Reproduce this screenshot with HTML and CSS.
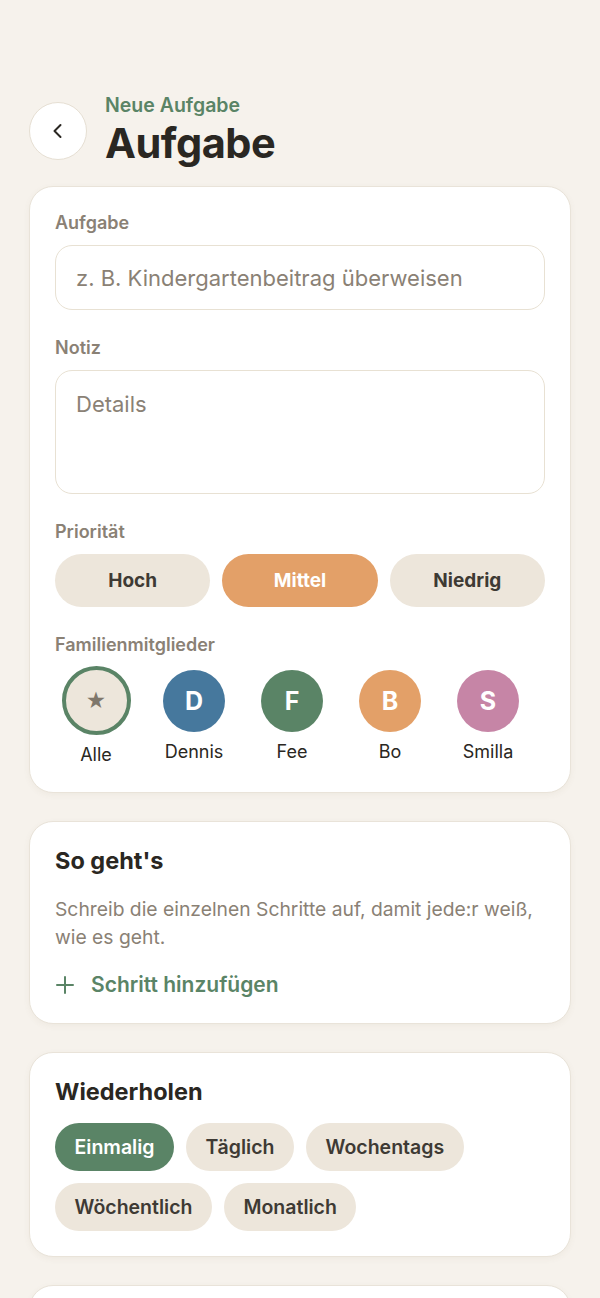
FILE: index.html
```html
<!DOCTYPE html>
<html lang="de">
<head>
    <meta charset="UTF-8">
    <meta name="viewport" content="width=device-width, initial-scale=1.0">
    <title>Neue Aufgabe</title>
    <link rel="stylesheet" href="styles.css">
</head>
<body>

    <div class="seite">
        <header class="kopf">
            <button class="zurueck" aria-label="Zurück">
                <svg width="20" height="20" viewBox="0 0 20 20"><path d="M12.5 4 L6.5 10 L12.5 16" fill="none" stroke="#2a2722" stroke-width="2" stroke-linecap="round" stroke-linejoin="round"/></svg>
            </button>
            <div class="titel">
                <div class="unterzeile">Neue Aufgabe</div>
                <h1>Aufgabe</h1>
            </div>
        </header>

        <section class="karte formular">
            <div class="feld">
                <label class="label">Aufgabe</label>
                <div class="eingabe">z. B. Kindergartenbeitrag überweisen</div>
            </div>
            <div class="feld">
                <label class="label">Notiz</label>
                <div class="eingabe notiz">Details</div>
            </div>
            <div class="feld">
                <label class="label">Priorität</label>
                <div class="prioritaet">
                    <button class="pille">Hoch</button>
                    <button class="pille aktiv-orange">Mittel</button>
                    <button class="pille">Niedrig</button>
                </div>
            </div>
            <div class="feld">
                <label class="label">Familienmitglieder</label>
                <div class="mitglieder">
                    <div class="mitglied gewaehlt">
                        <div class="avatar alle">★</div>
                        <span>Alle</span>
                    </div>
                    <div class="mitglied">
                        <div class="avatar blau">D</div>
                        <span>Dennis</span>
                    </div>
                    <div class="mitglied">
                        <div class="avatar gruen">F</div>
                        <span>Fee</span>
                    </div>
                    <div class="mitglied">
                        <div class="avatar orange">B</div>
                        <span>Bo</span>
                    </div>
                    <div class="mitglied">
                        <div class="avatar rosa">S</div>
                        <span>Smilla</span>
                    </div>
                </div>
            </div>
        </section>

        <section class="karte">
            <h2>So geht's</h2>
            <p class="hinweis">Schreib die einzelnen Schritte auf, damit jede:r weiß, wie es geht.</p>
            <button class="hinzufuegen">
                <svg width="20" height="20" viewBox="0 0 20 20"><path d="M10 2 V18 M2 10 H18" stroke="#5a8466" stroke-width="2" stroke-linecap="round"/></svg>
                Schritt hinzufügen
            </button>
        </section>

        <section class="karte">
            <h2>Wiederholen</h2>
            <div class="chips">
                <button class="chip aktiv">Einmalig</button>
                <button class="chip">Täglich</button>
                <button class="chip">Wochentags</button>
                <button class="chip">Wöchentlich</button>
                <button class="chip">Monatlich</button>
            </div>
        </section>

        <section class="karte"></section>
    </div>

</body>
</html>
```

FILE: styles.css
```css
body {
    font-family: Inter, "Noto Sans", sans-serif;
    background-color: #f6f2ec;
    margin: 0;
    padding: 0;
    color: #2a2722;
}

.seite {
    padding: 95px 29px 0;
    display: flex;
    flex-direction: column;
    gap: 28px;
}

.kopf {
    display: flex;
    align-items: flex-start;
    gap: 18px;
    margin-bottom: -10px;
}

.zurueck {
    width: 58px;
    height: 58px;
    border-radius: 50%;
    background-color: #ffffff;
    border: 1px solid #e6dfd3;
    display: flex;
    align-items: center;
    justify-content: center;
    padding: 0;
    flex-shrink: 0;
    margin-top: 7px;
}

.unterzeile {
    color: #5a8466;
    font-size: 19.5px;
    font-weight: 600;
    line-height: 20px;
}

h1 {
    margin: 3px 0 0;
    font-size: 41.5px;
    font-weight: 700;
    line-height: 50px;
    letter-spacing: -0.5px;
    color: #2a2722;
}

.karte {
    background-color: #ffffff;
    border: 1px solid #e9e3d9;
    border-radius: 24px;
    box-shadow: 0 2px 6px rgba(120, 100, 70, 0.06);
    padding: 25px 25px 25px;
    min-height: 20px;
}

.formular {
    display: flex;
    flex-direction: column;
    gap: 27px;
    padding-bottom: 26px;
}

.label {
    display: block;
    color: #8a8175;
    font-size: 18px;
    font-weight: 600;
    line-height: 22px;
    margin-bottom: 11px;
}

.eingabe {
    border: 1.5px solid #e8e1d3;
    border-radius: 17px;
    height: 65px;
    box-sizing: border-box;
    padding: 0 20px;
    display: flex;
    align-items: center;
    font-size: 22px;
    color: #8a8175;
}

.eingabe.notiz {
    height: 124px;
    align-items: flex-start;
    padding-top: 20px;
}

.prioritaet {
    display: grid;
    grid-template-columns: 1fr 1fr 1fr;
    gap: 12px;
}

button {
    font-family: inherit;
    border: none;
    cursor: pointer;
}

.pille {
    height: 53px;
    border-radius: 27px;
    background-color: #ede6db;
    color: #3e3a34;
    font-size: 19px;
    font-weight: 700;
}

.pille.aktiv-orange {
    background-color: #e3a068;
    color: #ffffff;
}

.mitglieder {
    display: flex;
    gap: 16px;
    margin-top: 14px;
}

.mitglied {
    width: 82px;
    display: flex;
    flex-direction: column;
    align-items: center;
    gap: 9px;
    font-size: 18px;
    line-height: 22px;
    color: #2a2722;
}

.avatar {
    width: 62px;
    height: 62px;
    border-radius: 50%;
    display: flex;
    align-items: center;
    justify-content: center;
    color: #ffffff;
    font-size: 25px;
    font-weight: 700;
    box-sizing: border-box;
}

.mitglied.gewaehlt .avatar {
    width: 69px;
    height: 69px;
    margin-top: -4px;
    border: 4px solid #5a8466;
}

.avatar.alle {
    background-color: #ede6db;
    color: #7f776b;
    font-size: 20px;
}

.blau { background-color: #46789d; }
.gruen { background-color: #5a8466; }
.orange { background-color: #e3a068; }
.rosa { background-color: #c685a6; }

h2 {
    margin: 0;
    font-size: 23.5px;
    font-weight: 700;
    line-height: 28px;
    color: #2a2722;
}

.hinweis {
    margin: 20px 0 0;
    font-size: 19.3px;
    line-height: 28px;
    color: #8a8175;
}

.hinzufuegen {
    margin-top: 21px;
    background: none;
    padding: 0;
    display: flex;
    align-items: center;
    gap: 16px;
    color: #5a8466;
    font-size: 21px;
    line-height: 26px;
    font-weight: 600;
}

.chips {
    display: flex;
    flex-wrap: wrap;
    gap: 12px;
    margin-top: 17px;
}

.chip {
    height: 48px;
    border-radius: 24px;
    padding: 0 19.5px;
    background-color: #ede6db;
    color: #3e3a34;
    font-size: 19.5px;
    font-weight: 600;
}

.chip.aktiv {
    background-color: #5a8466;
    color: #ffffff;
}
```
